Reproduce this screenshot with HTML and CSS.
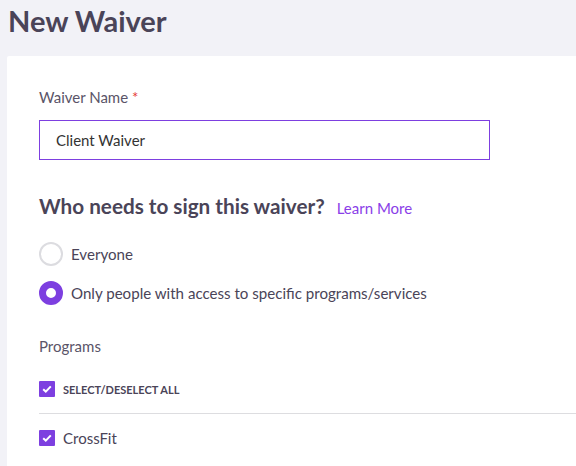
FILE: index.html
```html
<!DOCTYPE html>
<html>
<head>
  <title>New Waiver</title>
  <link rel="stylesheet" href="styles.css">
</head>
<body>
  <h1 class="page-title">New Waiver</h1>
  <div class="card">
    <label class="field-label" for="waiverName">Waiver Name <span class="required">*</span></label>
    <input class="text-input" type="text" id="waiverName" value="Client Waiver">

    <div class="section-head">
      <h2>Who needs to sign this waiver?</h2>
      <a href="#" class="learn-more">Learn More</a>
    </div>

    <div class="radio-row">
      <span class="radio"></span>
      <span>Everyone</span>
    </div>
    <div class="radio-row">
      <span class="radio checked"></span>
      <span>Only people with access to specific programs/services</span>
    </div>

    <div class="programs-label">Programs</div>

    <div class="check-row select-all">
      <span class="checkbox">
        <svg width="10" height="8" viewBox="0 0 10 8"><path d="M1.2 4.2 L3.8 6.6 L8.8 1.4" fill="none" stroke="#fff" stroke-width="2"/></svg>
      </span>
      <span>SELECT/DESELECT ALL</span>
    </div>
    <div class="check-row program">
      <span class="checkbox">
        <svg width="10" height="8" viewBox="0 0 10 8"><path d="M1.2 4.2 L3.8 6.6 L8.8 1.4" fill="none" stroke="#fff" stroke-width="2"/></svg>
      </span>
      <span>CrossFit</span>
    </div>
  </div>
</body>
</html>
```

FILE: styles.css
```css
body {
  font-family: Lato, "Open Sans", sans-serif;
  background-color: #f2f2f7;
  margin: 0;
  padding: 0;
  color: #4a4458;
  overflow: hidden;
}

.page-title {
  margin: 0;
  padding: 2px 0 0 8px;
  height: 54px;
  font-size: 29px;
  font-weight: 700;
  color: #4a4458;
  line-height: 38px;
}

.card {
  background: #fff;
  margin-left: 7px;
  padding: 30px 0 0 32px;
  border-top-left-radius: 2px;
  height: calc(100vh - 56px);
  box-sizing: border-box;
}

.field-label {
  display: block;
  font-size: 15px;
  color: #5a5468;
  line-height: 22px;
}

.required {
  color: #e53935;
}

.text-input {
  display: block;
  margin-top: 12px;
  width: 451px;
  height: 40px;
  box-sizing: border-box;
  border: 1px solid #7d3fe0;
  padding: 0 16px;
  font-family: inherit;
  font-size: 15px;
  color: #333;
  outline: none;
}

.section-head {
  display: flex;
  align-items: baseline;
  margin-top: 32px;
}

.section-head h2 {
  margin: 0;
  font-size: 20.7px;
  font-weight: 700;
  color: #4a4458;
  line-height: 28px;
}

.learn-more {
  margin-left: 12px;
  font-size: 15px;
  color: #8a3ee8;
  text-decoration: none;
}

.radio-row {
  display: flex;
  align-items: center;
  gap: 8px;
  font-size: 15.1px;
  color: #4a4458;
  margin-top: 22px;
}

.radio-row + .radio-row {
  margin-top: 15px;
}

.radio {
  width: 24px;
  height: 24px;
  box-sizing: border-box;
  border: 2px solid #dcdce0;
  border-radius: 50%;
}

.radio.checked {
  border: 7px solid #7d3fe0;
}

.programs-label {
  margin-top: 32px;
  font-size: 15px;
  color: #5a5468;
}

.check-row {
  display: flex;
  align-items: center;
  gap: 8px;
  font-size: 15px;
  color: #4a4458;
  padding: 10px 0;
}

.select-all {
  margin-top: 16px;
  font-size: 11px;
  font-weight: 700;
  border-bottom: 1px solid #dddde0;
  padding-bottom: 16px;
}

.program {
  padding-top: 15px;
}

.checkbox {
  width: 16px;
  height: 16px;
  background: #7d3fe0;
  border-radius: 1px;
  display: flex;
  align-items: center;
  justify-content: center;
}
```
